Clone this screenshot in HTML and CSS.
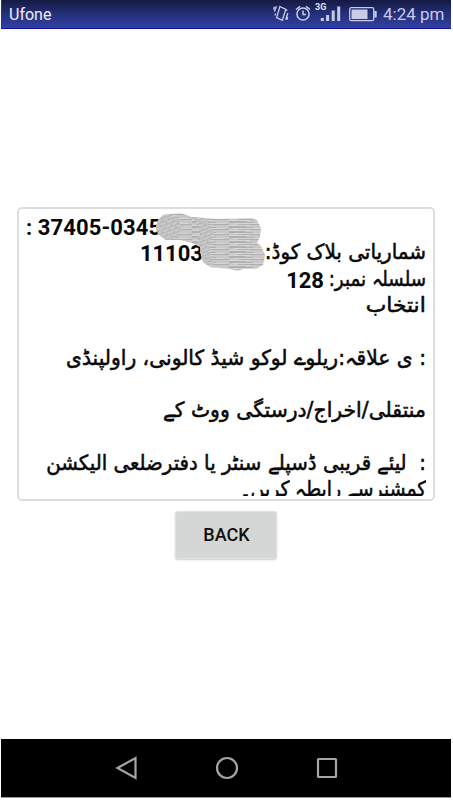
FILE: index.html
```
<!DOCTYPE html>
<html lang="ur">
<head>
<meta charset="utf-8">
<title>Ufone</title>
<link rel="stylesheet" href="styles.css">
</head>
<body>
<div class="phone">
  <header class="status">
    <span class="carrier">Ufone</span>
    <svg class="icons" width="108" height="28" viewBox="0 0 108 28" fill="none" stroke="#c9cbe6" stroke-width="1.3">
      <path d="M7.9 6.5 13.8 9.4 10.3 20.3 4.6 17.6ZM4.4 6.2 2.4 11.5M2.5 6.8 1.6 9.5M15.8 13 13.8 19.8M14.7 9.5 14.6 11M3.4 13.5 3.2 15.5M15.7 17 14.9 19.6"/>
      <circle cx="31" cy="14" r="6.1" stroke-width="1.5"/>
      <path d="M31 10.5V14.5H34M24 9.5 28 6.3M34 6.3 38 9.5" stroke-width="1.5"/>
      <text x="43" y="10" class="net">3G</text>
      <path d="M50.3 18V21M55.6 15V21M61.2 10.5V21M66.7 6.5V21" stroke-width="3"/>
      <rect x="77.7" y="7.7" width="24" height="13" rx="1.5"/>
      <path d="M103.5 11V17.5" stroke-width="2.4"/>
      <rect x="79.5" y="9.5" width="16" height="9.5" fill="#c9cbe6" stroke="none"/>
    </svg>
    <span class="clock">4:24 pm</span>
  </header>
  <main class="content">
    <section class="card">
      <div class="message" dir="rtl">
        <p class="line id" dir="ltr"><span>: 37405-0345</span></p>
        <p class="line"><span class="ur w2">شماریاتی بلاک کوڈ:</span><span class="num code" dir="ltr">11103</span></p>
        <p class="line"><span class="ur w3">سلسلہ نمبر:</span><span class="num serial">128</span></p>
        <p class="line"><span class="ur w4">انتخاب</span></p>
        <p class="line"></p>
        <p class="line"><span class="ur w6">: ی علاقہ:ریلوے لوکو شیڈ کالونی، راولپنڈی</span></p>
        <p class="line"></p>
        <p class="line"><span class="ur w8">منتقلی/اخراج/درستگی ووٹ کے</span></p>
        <p class="line"></p>
        <p class="line"><span class="ur w10">:&nbsp; لیئے قریبی ڈسپلے سنٹر یا دفترضلعی الیکشن</span></p>
        <p class="line"><span class="ur w11">کمشنرسے رابطہ کریں۔</span></p>
      </div>
      <svg class="scribble" width="112" height="60" viewBox="0 0 112 60">
        <defs>
          <pattern id="hatch" width="37" height="5" patternUnits="userSpaceOnUse">
            <rect width="37" height="5" fill="#c8c8c8"/>
            <path d="M0 .5H24M9 2.5H37M0 4.5H17" stroke="#a9a9a9" stroke-width=".8"/>
            <path d="M4 1.5H33M0 3.5H21" stroke="#dedede" stroke-width=".7"/>
          </pattern>
          <pattern id="grain" width="5" height="5" patternUnits="userSpaceOnUse" patternTransform="rotate(25)">
            <rect width="5" height="5" fill="#c3c3c3"/>
            <path d="M0 1H2M3 3H5M1 4H2" stroke="#989898" stroke-width=".7"/>
            <path d="M2 2H4M0 3H2" stroke="#e4e4e4" stroke-width=".7"/>
          </pattern>
        </defs>
        <path fill="url(#hatch)" d="M3 8 8 3 15 2 26 1 37 5 50 6 63 7 96 6 102 8 106 16 105 25 102 31 106 34 110 43 108 53 101 57 88 57 82 59 75 57 55 55 49 51 46 44 45 35 37 31 25 28 11 28 3 22 1 15Z"/>
        <path fill="url(#grain)" d="M3 8 8 3 15 2 22 6 26 14 24 23 18 27 11 28 3 22 1 15ZM39 6 50 6 54 11 58 20 54 33 56 45 59 54 49 51 46 44 45 35 41 31 45 21Z"/>
      </svg>
    </section>
    <button class="back">BACK</button>
  </main>
  <nav class="nav">
    <svg width="26" height="26" viewBox="0 0 26 26"><path d="M3.5 13 21.5 3V23Z"/></svg>
    <svg width="26" height="26" viewBox="0 0 26 26"><circle cx="13" cy="13" r="10"/></svg>
    <svg width="26" height="26" viewBox="0 0 26 26"><rect x="4" y="4" width="18" height="18" rx=".5"/></svg>
  </nav>
</div>
</body>
</html>
```
FILE: styles.css
```
* { box-sizing: border-box; }
body { margin: 0; background: #fff; font-family: Roboto, "DejaVu Sans", sans-serif; }
.phone { width: 450px; height: 798px; margin-left: 1px; display: flex; flex-direction: column; }
.status { height: 29px; flex: none; display: flex; align-items: center; padding: 0 7px 0 7px; color: #dcdef0; background: linear-gradient(#141a42, #25307a 50%, #3040a4); border-bottom: 1px solid #10109c; border-left: 1px solid #2030a0; }
.carrier { font-size: 16px; flex: 1; color: #eeeff8; }
.icons { margin-right: 3px; flex: none; }
.net { font: bold 9px Roboto, sans-serif; fill: #e0e1f2; stroke: none; }
.clock { font-size: 17px; width: 61px; white-space: nowrap; color: #c9cbe6; }
.content { flex: 1; display: flex; flex-direction: column; align-items: center; padding-top: 178px; }
.card { position: relative; width: 418px; height: 294px; border: 2px solid #dedede; border-radius: 5px; padding: 5px 7px 3px; }
.message { height: 282px; overflow: hidden; font: bold 22px/26.35px Roboto, "DejaVu Sans", sans-serif; color: #080808; }
.line { margin: 0; height: 26.35px; display: flex; white-space: nowrap; }
.line span { flex: none; }
.line .ur { font: 21px/25px "DejaVu Sans", sans-serif; -webkit-text-stroke: .55px #080808; transform-origin: right top; }
.id { padding-top: 1px; letter-spacing: .1px; }
.num { padding-top: 1px; }
.w2 { width: 162px; transform: scaleX(.95); }
.w3 { width: 97px; transform: scaleX(.87); }
.w4 { transform: scaleX(1.04); }
.w6 { transform: scaleX(.965); }
.w8 { transform: scaleX(.97); }
.w10 { transform: scaleX(.94); }
.w11 { transform: scaleX(.895); }
.code { margin-right: 61px; }
.serial { margin-right: 5px; }
.scribble { position: absolute; left: 136px; top: 3px; }
.back { width: 102px; height: 48px; margin-top: 10px; border: 1px solid #e0e2e1; border-radius: 3px; background: #d5d7d6; box-shadow: 0 1px 2px #ccc; font: 500 18px Roboto, sans-serif; color: #111; padding: 0 0 2px 1px; }
.nav { height: 59px; flex: none; display: flex; justify-content: center; align-items: center; gap: 74px; padding-left: 2px; background: #000; border-bottom: 1px solid #999; }
.nav svg { fill: none; stroke: #a5a5a5; stroke-width: 2.2; }
```
